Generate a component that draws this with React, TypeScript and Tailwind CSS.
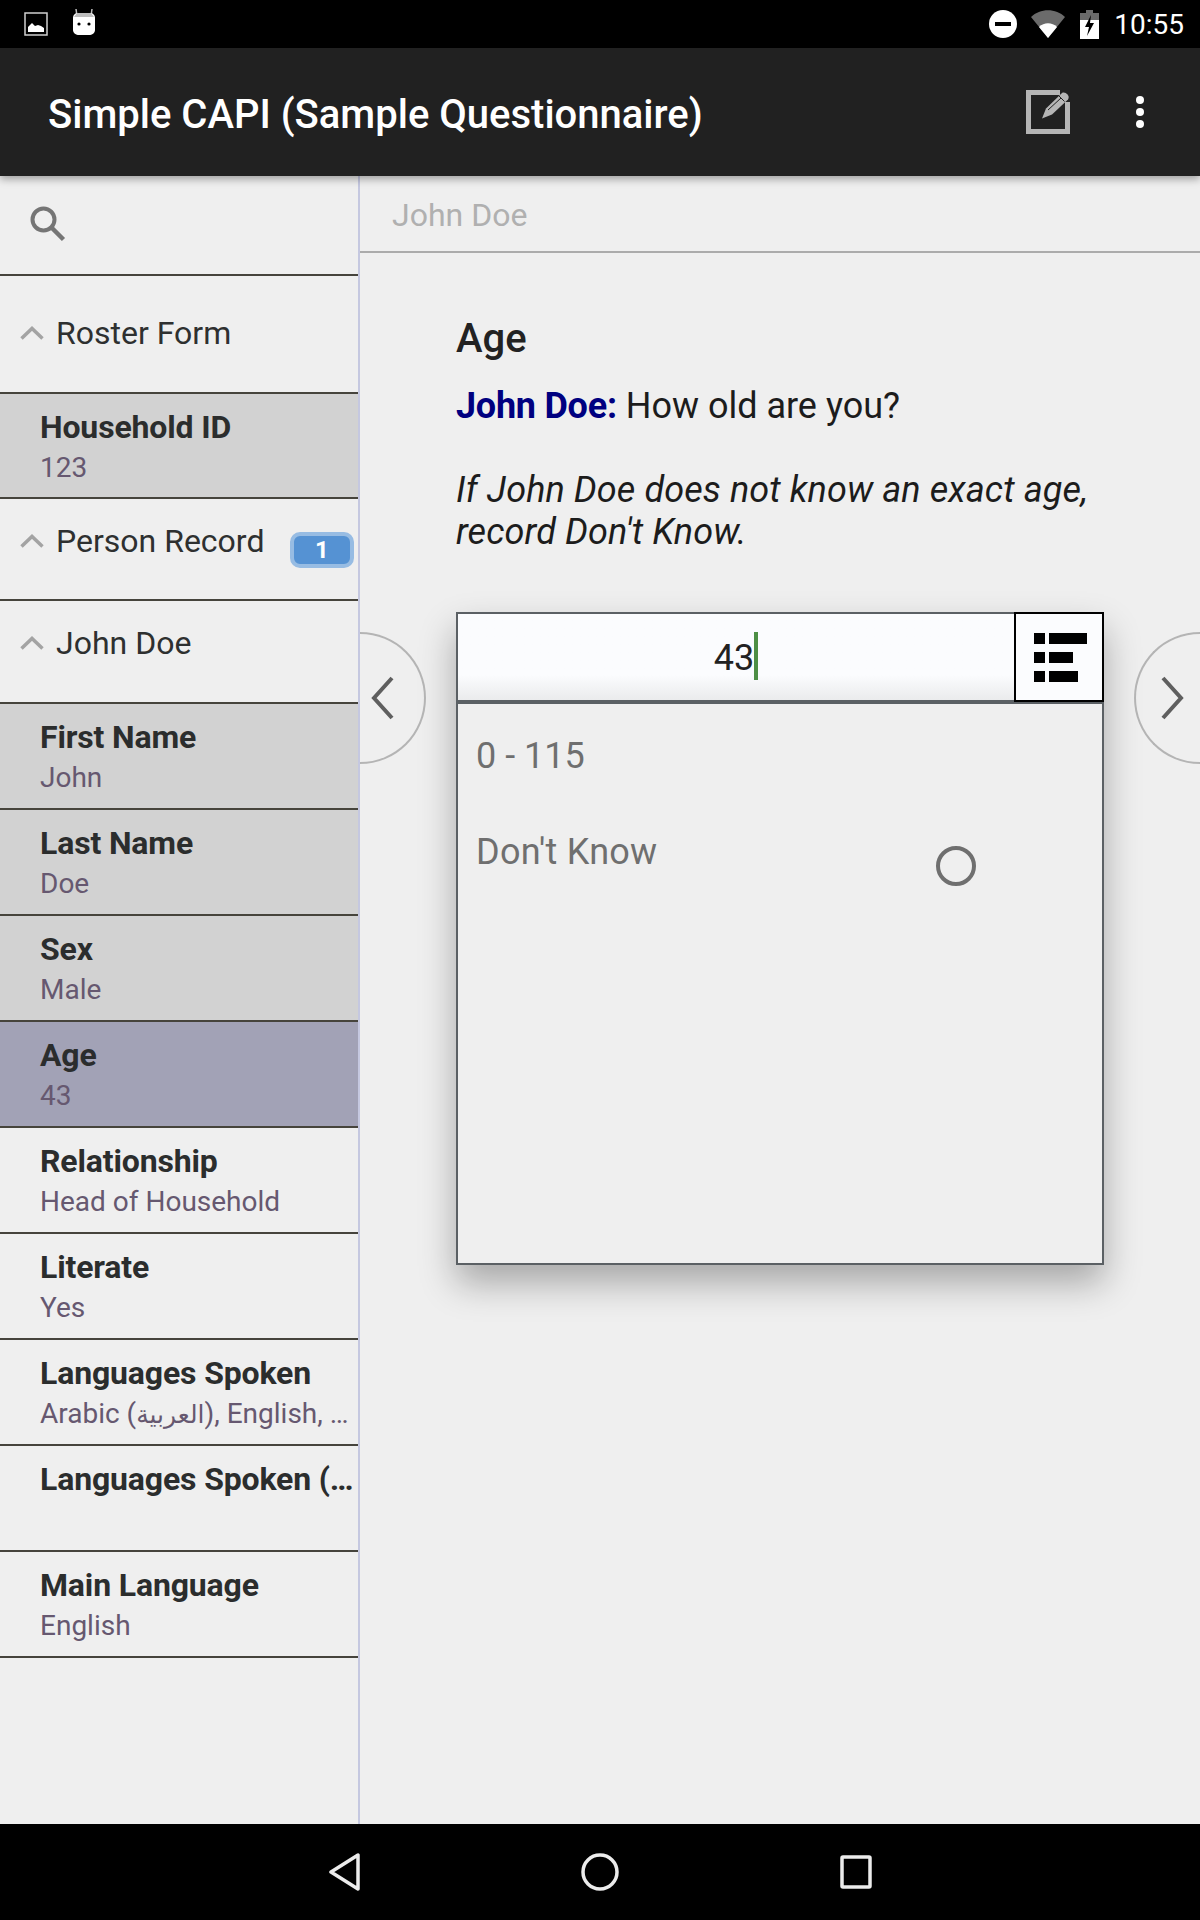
import React from "react";

const fontStack = { fontFamily: 'Roboto, "DejaVu Sans", sans-serif' };

interface NavItem {
  label: string;
  value?: React.ReactNode;
  tone?: "plain" | "done" | "current";
}

const rosterItems: NavItem[] = [
  { label: "First Name", value: "John", tone: "done" },
  { label: "Last Name", value: "Doe", tone: "done" },
  { label: "Sex", value: "Male", tone: "done" },
  { label: "Age", value: "43", tone: "current" },
  { label: "Relationship", value: "Head of Household" },
  { label: "Literate", value: "Yes" },
  {
    label: "Languages Spoken",
    value: (
      <>
        Arabic (<span className="text-[25px]">العربية</span>), English, …
      </>
    ),
  },
  { label: "Languages Spoken (…" },
  { label: "Main Language", value: "English" },
];

function FieldRow({ label, value, tone = "plain" }: NavItem) {
  const bg =
    tone === "done" ? "bg-[#d2d2d2]" : tone === "current" ? "bg-[#a2a2b6]" : "bg-[#efefef]";
  return (
    <div className={`h-[106px] shrink-0 border-b-2 border-[#46443c] pl-10 pt-[11px] ${bg}`}>
      <div className="h-[44px] text-[32px] leading-[44px] font-bold text-[#2b2d2d] whitespace-nowrap tracking-[-0.15px]">
        {label}
      </div>
      <div className="mt-[1px] h-[36px] text-[28px] leading-[36px] text-[#665870] whitespace-nowrap">
        {value}
      </div>
    </div>
  );
}

function GroupRow({
  label,
  height,
  pad,
  badge,
}: {
  label: string;
  height: string;
  pad: string;
  badge?: string;
}) {
  return (
    <div className={`relative flex shrink-0 items-start border-b-2 border-[#46443c] pl-5 ${height} ${pad}`}>
      <svg className="mt-[32px] h-[14px] w-6 shrink-0" viewBox="0 0 24 14" fill="none">
        <path d="M1.5 12.5 12 2.5l10.5 10" stroke="#a3a3a3" strokeWidth="3.5" />
      </svg>
      <span className="ml-[12px] mt-[17px] text-[32px] leading-[44px] text-[#2e3030]">{label}</span>
      {badge && (
        <span className="absolute right-[4px] top-[33px] flex h-9 w-[64px] items-center justify-center rounded-[10px] border-4 border-[#97bce3] bg-[#5592d3] text-[24px] font-bold text-white">
          {badge}
        </span>
      )}
    </div>
  );
}

function StatusBar() {
  return (
    <div className="flex h-12 shrink-0 items-center justify-between bg-black pl-6 pr-4">
      <div className="flex items-center gap-6">
        <svg className="h-6 w-6" viewBox="0 0 24 24">
          <rect x="1" y="1" width="22" height="22" fill="none" stroke="#cfcfcf" strokeWidth="1.5" />
          <path d="M4 20v-5l4-4 3 3 3-1 3 1 3 2v4z" fill="#fff" />
        </svg>
        <svg className="-mt-1 h-[28px] w-6" viewBox="0 0 24 28">
          <path d="M5 8 4 1M19 8l1-7" stroke="#bdbdbd" strokeWidth="1.5" />
          <path d="M6 5h12c3 0 5 2 5 5v12c0 3-3 5-6 5H7c-3 0-6-2-6-5V10c0-3 2-5 5-5z" fill="#fff" />
          <path d="M5 5h14l3 4H2z" fill="#bdbdbd" />
          <circle cx="7" cy="16" r="1.6" fill="#000" />
          <circle cx="17" cy="16" r="1.6" fill="#000" />
        </svg>
      </div>
      <div className="flex items-center">
        <svg className="h-7 w-7" viewBox="0 0 28 28">
          <circle cx="14" cy="14" r="14" fill="#fff" />
          <rect x="6" y="12" width="16" height="4" fill="#000" />
        </svg>
        <svg className="ml-[14px] h-[28px] w-[34px]" viewBox="0 0 34 28">
          <path d="M0 7C9-2 25-2 34 7L17 28z" fill="#6b6b6b" />
          <path d="M8 17c5-5 13-5 18 0l-9 11z" fill="#fff" />
        </svg>
        <svg className="ml-[15px] h-[29px] w-[19px]" viewBox="0 0 19 29">
          <path d="M6 0h7v3h6v7H0V3h6z" fill="#6b6b6b" />
          <path d="M0 10h19v19H0z" fill="#fff" />
          <path d="M11 5 5 17h4l-2 9 7-13h-4z" fill="#000" />
        </svg>
        <span className="ml-[15px] mt-[2px] text-[28px] leading-none text-white">10:55</span>
      </div>
    </div>
  );
}

function ArrowCircle({ side }: { side: "left" | "right" }) {
  const isLeft = side === "left";
  return (
    <div
      className={`absolute top-[456px] h-[132px] w-[66px] border-2 border-[#b4b4b4] ${
        isLeft
          ? "left-0 rounded-r-[66px] border-l-0"
          : "right-0 rounded-l-[66px] border-r-0"
      } flex items-center justify-center`}
    >
      <svg className={`h-[46px] w-[24px] ${isLeft ? "mr-[18px]" : "ml-[8px]"}`} viewBox="0 0 24 46" fill="none">
        <path
          d={isLeft ? "M21 3 3 23l18 20" : "M3 3l18 20L3 43"}
          stroke="#5f5f5f"
          strokeWidth="4"
        />
      </svg>
    </div>
  );
}

export default function App() {
  return (
    <div className="flex h-[1920px] w-[1200px] flex-col overflow-hidden bg-[#efefef]" style={fontStack}>
      <StatusBar />

      {/* Action bar */}
      <div className="relative z-10 flex h-32 shrink-0 items-center bg-[#212121] pl-12 shadow-[0_3px_8px_rgba(0,0,0,0.35)]">
        <div className="mt-[6px] text-[40px] font-medium text-white whitespace-nowrap">
          Simple CAPI (Sample Questionnaire)
        </div>
        <svg className="ml-auto h-[44px] w-[44px]" viewBox="0 0 44 44" fill="none">
          <path d="M34 2.5H2.5v39h39V12" stroke="#b5b5b5" strokeWidth="5" />
          <path d="M16 28.5l4-10L36 3c2-1 4 0 5.5 1.5s1.5 3.5.5 5L26 24.5z" fill="#b5b5b5" />
          <path d="M33 6l5.5 5.5M22 20 35 8" stroke="#212121" strokeWidth="1" />
        </svg>
        <div className="ml-[66px] mr-14 flex flex-col gap-1">
          <span className="h-2 w-2 rounded-full bg-white" />
          <span className="h-2 w-2 rounded-full bg-white" />
          <span className="h-2 w-2 rounded-full bg-white" />
        </div>
      </div>

      <div className="flex min-h-0 flex-1">
        {/* Question tree */}
        <div className="flex w-[360px] shrink-0 flex-col border-r-2 border-[#c5c8e0]">
          <div className="flex h-[100px] shrink-0 items-start border-b-2 border-[#46443c] pl-[30px] pt-[30px]">
            <svg className="h-9 w-9" viewBox="0 0 36 36" fill="none">
              <circle cx="13.5" cy="13.5" r="11" stroke="#757575" strokeWidth="4" />
              <path d="m21.5 21.5 12 12" stroke="#757575" strokeWidth="4.5" />
            </svg>
          </div>
          <GroupRow label="Roster Form" height="h-[118px]" pad="pt-[18px]" />
          <div className="h-[105px] shrink-0 border-b-2 border-[#46443c] bg-[#d2d2d2] pl-10 pt-[11px]">
            <div className="h-[44px] text-[32px] leading-[44px] font-bold text-[#2b2d2d] tracking-[-0.15px]">
              Household ID
            </div>
            <div className="mt-[1px] h-[36px] text-[28px] leading-[36px] text-[#665870]">123</div>
          </div>
          <GroupRow label="Person Record" height="h-[102px]" pad="pt-[3px]" badge="1" />
          <GroupRow label="John Doe" height="h-[103px]" pad="pt-[3px]" />
          {rosterItems.map((item) => (
            <FieldRow key={item.label} {...item} />
          ))}
        </div>

        {/* Question pane */}
        <div className="relative min-w-0 flex-1">
          <div className="h-[77px] border-b-2 border-[#ababab] pl-8 pt-[19px] text-[32px] leading-[40px] text-[#b0b0b0]">
            John Doe
          </div>
          <ArrowCircle side="left" />
          <ArrowCircle side="right" />
          <div className="px-24 pt-[64px]">
            <div className="text-[40px] leading-[44px] font-medium text-[#222]">Age</div>
            <div className="mt-[22px] text-[36px] leading-[46px] text-[#1c1c1c]">
              <b className="font-bold text-[#000080] tracking-[-0.25px]">John Doe:</b> How old are you?
            </div>
            <div className="mt-[40px] text-[36px] leading-[42px] italic text-[#1c1c1c] tracking-[0.1px]">
              If John Doe does not know an exact age, record Don't Know.
            </div>
            <div className="mt-[59px] shadow-[0_18px_34px_rgba(0,0,0,0.3)]">
              <div className="flex h-[90px] bg-gradient-to-b from-[#fbfcfe] via-[#fbfcfe] via-70% to-[#e9eaeb]">
                <div className="flex flex-1 items-center justify-center border-2 border-r-0 border-[#5b6064] text-[36px] text-[#222]">
                  <span className="mt-[2px]">43</span>
                  <span className="-mt-[2px] h-[48px] w-1 bg-[#4d8f45]" />
                </div>
                <div className="flex w-[90px] items-center justify-center border-2 border-black bg-[#fbfcfe]">
                  <div className="ml-[3px] grid w-[54px] grid-cols-[11px_1fr] gap-x-[4px] gap-y-[8px]">
                    <span className="h-[11px] bg-black" />
                    <span className="h-[11px] w-[38px] bg-black" />
                    <span className="h-[11px] bg-black" />
                    <span className="h-[11px] w-[24px] bg-black" />
                    <span className="h-[11px] bg-black" />
                    <span className="h-[11px] w-[29px] bg-black" />
                  </div>
                </div>
              </div>
              <div className="h-[563px] border-2 border-[#5b6064] bg-[#efefef] pl-[18px] pt-[28px] text-[36px] leading-[48px] text-[#6f6f6f]">
                <div>0 - 115</div>
                <div className="relative mt-[48px] tracking-[0.25px]">
                  Don't Know
                  <span className="absolute left-[460px] top-[18px] h-10 w-10 rounded-full border-4 border-[#6f6f6f]" />
                </div>
              </div>
            </div>
          </div>
        </div>
      </div>

      {/* Navigation bar */}
      <div className="flex h-24 shrink-0 items-center justify-center gap-[221px] bg-black">
        <svg className="h-[38px] w-[31px]" viewBox="0 0 31 38" fill="none">
          <path d="M29 2v34L2 19z" stroke="#ececec" strokeWidth="3.5" strokeLinejoin="round" />
        </svg>
        <svg className="h-[38px] w-[38px]" viewBox="0 0 38 38" fill="none">
          <circle cx="19" cy="19" r="17" stroke="#ececec" strokeWidth="3.5" />
        </svg>
        <svg className="h-[34px] w-[32px]" viewBox="0 0 32 34" fill="none">
          <rect x="2" y="2" width="28" height="30" rx="1" stroke="#ececec" strokeWidth="3.5" />
        </svg>
      </div>
    </div>
  );
}
